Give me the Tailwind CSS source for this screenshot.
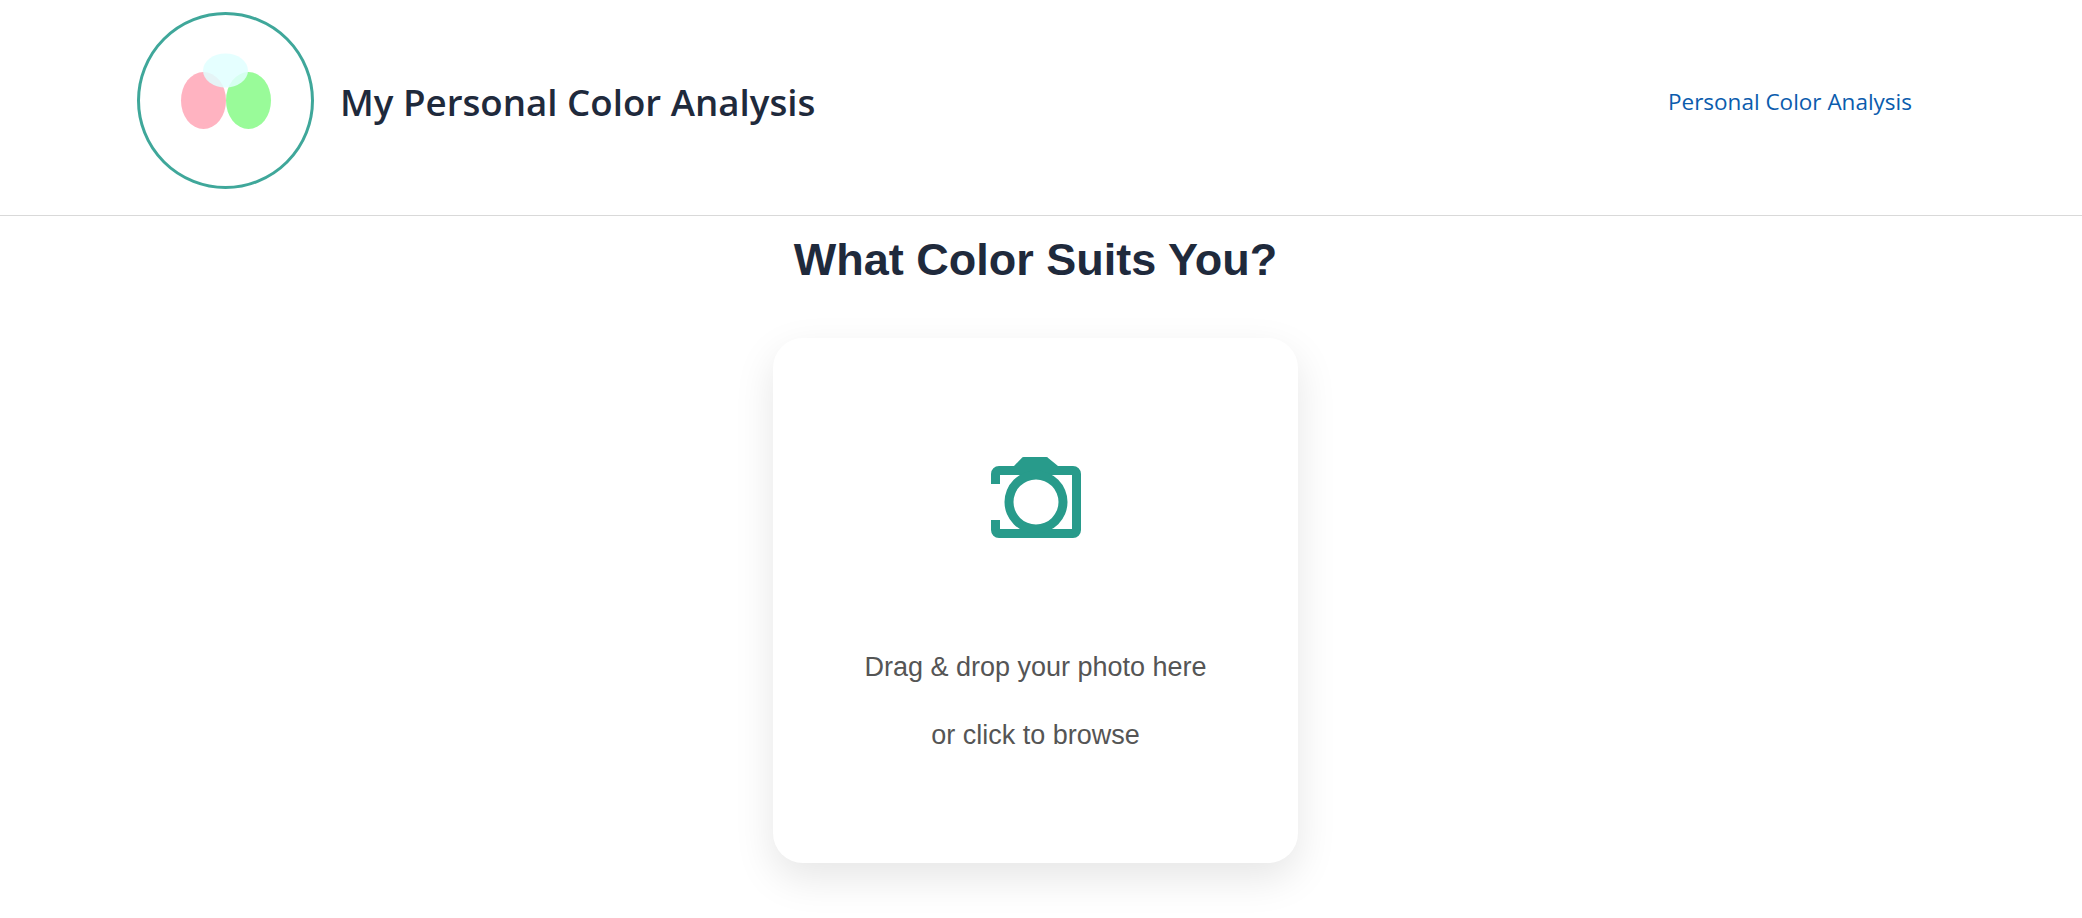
<!DOCTYPE html>
<html lang="en">
<head>
    <meta charset="UTF-8">
    <title>My Personal Color Analysis</title>
    <script src="https://cdn.jsdelivr.net/npm/@tailwindcss/browser@4"></script>
</head>
<body class="bg-white h-[918px] overflow-hidden font-['Liberation_Sans',sans-serif]">
    <!-- Header -->
    <header class="h-[216px] border-b border-[#d9d9d9] flex items-center justify-between pb-[14px] pl-[137px] pr-[170px]">
        <div class="flex items-center gap-[26px]">
            <svg class="w-[177px] h-[177px] blur-[0.5px]" viewBox="0 0 177 177">
                <circle cx="88.500" cy="88.500" r="87" fill="#fff" stroke="#2a9d8f" stroke-opacity="0.9" stroke-width="3"/>
                <ellipse cx="66.500" cy="88.500" rx="22.500" ry="28.500" fill="#ffb3c1"/>
                <ellipse cx="111.500" cy="88.500" rx="22.500" ry="28.500" fill="#99fb99"/>
                <ellipse cx="88.500" cy="58.500" rx="22.500" ry="17" fill="#e0ffff" fill-opacity="0.85"/>
            </svg>
            <h2 class="mt-[3px] font-['Open_Sans',sans-serif] font-semibold text-[36.7px] leading-none text-[#1f2a3c]">My Personal Color Analysis</h2>
        </div>
        <a href="#" class="mt-[2px] font-['Open_Sans',sans-serif] text-[22.5px] text-[#0b5cad]">Personal Color Analysis</a>
    </header>

    <main class="w-[2071px] flex flex-col items-center">
        <h1 class="mt-[18px] font-bold text-[45px] leading-[52px] text-[#1f2a3c]">What Color Suits You?</h1>

        <!-- Upload card -->
        <div class="mt-[52px] w-[525px] h-[525px] rounded-[30px] bg-white shadow-[0_15px_40px_rgba(0,0,0,0.1)] flex flex-col items-center pt-[119px]">
            <svg class="w-[90px] h-[81px]" viewBox="0 0 90 81" fill="#289b8b">
                <path d="M33 0H55a3 3 0 0 1 2.500 1.200L67 9H82a8 8 0 0 1 8 8V73a8 8 0 0 1-8 8H8a8 8 0 0 1-8-8V63H9V72H81V18H9V27H0V17a8 8 0 0 1 8-8H23L30.500 1.200A3 3 0 0 1 33 0Z"/>
                <path fill-rule="evenodd" d="M45 13.500a31.500 31.500 0 1 0 0 63a31.500 31.500 0 1 0 0-63ZM45 22.500a22.500 22.500 0 1 1 0 45a22.500 22.500 0 1 1 0-45Z"/>
            </svg>
            <p class="mt-[109px] text-[27px] leading-[40px] text-[#555]">Drag &amp; drop your photo here</p>
            <p class="mt-[28px] text-[27px] leading-[40px] text-[#555]">or click to browse</p>
        </div>
    </main>
</body>
</html>
